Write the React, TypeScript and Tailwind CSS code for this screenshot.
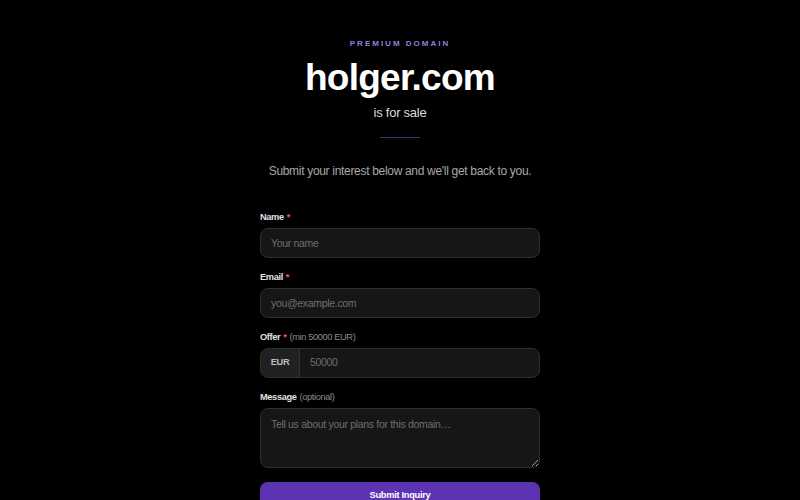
import { useState } from 'react'

const inputBase =
  'h-[30px] w-full rounded-lg border border-[#2f2f2f] bg-[#161616] px-[10px] text-[10.5px] tracking-[-0.03em] text-neutral-200 placeholder:text-[#6e6e6e] outline-none focus:border-violet-500'

function Label({ text, required, hint }: { text: string; required?: boolean; hint?: string }) {
  return (
    <label className="mb-1 block text-[9.25px] leading-[14px] font-bold tracking-[-0.04em] text-[#e0e0e0]">
      {text}
      {required && <span className="ml-[3px] text-[#e35d6a]">*</span>}
      {hint && <span className="ml-[3px] font-normal text-[#8a8a8a]">{hint}</span>}
    </label>
  )
}

export default function App() {
  const [name, setName] = useState('')
  const [email, setEmail] = useState('')
  const [offer, setOffer] = useState('')
  const [message, setMessage] = useState('')

  return (
    <div
      className="min-h-screen bg-black text-white"
      style={{ fontFamily: '"Liberation Sans", Arial, sans-serif' }}
    >
      <div className="mx-auto flex w-[280px] flex-col items-center pt-[38px]">
        <p className="text-[8px] leading-[12px] font-bold tracking-[0.25em] text-[#8f7fd8]">
          PREMIUM DOMAIN
        </p>
        <h1 className="mt-2 text-[37px] leading-[40px] font-bold tracking-[-0.02em] text-white">
          holger.com
        </h1>
        <p className="mt-[5px] text-[13px] leading-[20px] tracking-[-0.02em] text-[#dcdcdc]">is for sale</p>
        <div className="mt-[14px] h-px w-10 bg-[#3a2f7a]" />
        <p className="mt-[23px] text-[12px] leading-[20px] tracking-[-0.026em] text-[#a8a8a8] whitespace-nowrap">
          Submit your interest below and we&apos;ll get back to you.
        </p>

        <form className="mt-[29px] flex w-full flex-col gap-3" onSubmit={(e) => e.preventDefault()}>
          <div>
            <Label text="Name" required />
            <input
              className={inputBase}
              placeholder="Your name"
              value={name}
              onChange={(e) => setName(e.target.value)}
            />
          </div>
          <div>
            <Label text="Email" required />
            <input
              className={inputBase}
              placeholder="you@example.com"
              value={email}
              onChange={(e) => setEmail(e.target.value)}
            />
          </div>
          <div>
            <Label text="Offer" required hint="(min 50000 EUR)" />
            <div className="flex h-[30px] w-full overflow-hidden rounded-lg border border-[#2f2f2f] bg-[#161616]">
              <span className="flex w-[39px] shrink-0 items-center justify-center border-r border-[#2f2f2f] bg-[#212121] text-[9.25px] font-bold tracking-[-0.03em] text-[#bdbdbd]">
                EUR
              </span>
              <input
                className="w-full bg-transparent px-[10px] text-[10.5px] tracking-[-0.03em] text-neutral-200 placeholder:text-[#6e6e6e] outline-none"
                placeholder="50000"
                value={offer}
                onChange={(e) => setOffer(e.target.value)}
              />
            </div>
          </div>
          <div>
            <Label text="Message" hint="(optional)" />
            <textarea
              className="block h-[60px] w-full rounded-lg border border-[#2f2f2f] bg-[#161616] px-[10px] py-[8px] text-[10.5px] tracking-[-0.03em] text-neutral-200 placeholder:text-[#6e6e6e] outline-none"
              placeholder="Tell us about your plans for this domain…"
              value={message}
              onChange={(e) => setMessage(e.target.value)}
            />
          </div>
          <button
            type="submit"
            className="mt-[2px] h-[28px] w-full rounded-lg bg-[#5c33b2] text-[9.25px] font-bold tracking-[-0.03em] text-white"
          >
            Submit Inquiry
          </button>
        </form>
      </div>
    </div>
  )
}
